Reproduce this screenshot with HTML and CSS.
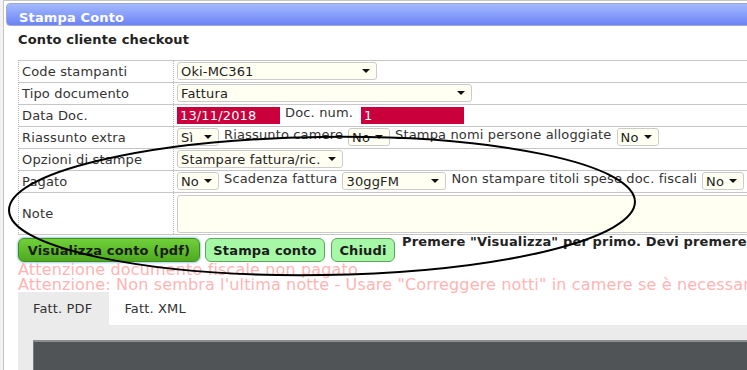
FILE: index.html
```html
<!DOCTYPE html>
<html lang="it">
<head>
  <meta charset="UTF-8">
  <meta name="viewport" content="width=device-width, initial-scale=1.0">
  <title>Stampa Conto</title>
  <link rel="stylesheet" href="styles.css">
</head>
<body>
  <div class="dialog">
    <div class="titlebar">Stampa Conto</div>
    <div class="content">
      <div class="heading">Conto cliente checkout</div>

      <div class="form">
        <div class="row">
          <div class="lbl">Code stampanti</div>
          <div class="val"><span class="sel w-printer">Oki-MC361</span></div>
        </div>
        <div class="row">
          <div class="lbl">Tipo documento</div>
          <div class="val"><span class="sel w-doctype">Fattura</span></div>
        </div>
        <div class="row">
          <div class="lbl">Data Doc.</div>
          <div class="val">
            <span class="red">13/11/2018</span>
            <span class="txt docnum">Doc. num.</span>
            <span class="red">1</span>
          </div>
        </div>
        <div class="row">
          <div class="lbl">Riassunto extra</div>
          <div class="val">
            <span class="sel w-small">Sì</span>
            <span class="txt">Riassunto camere</span>
            <span class="sel w-small">No</span>
            <span class="txt">Stampa nomi persone alloggiate</span>
            <span class="sel w-small">No</span>
          </div>
        </div>
        <div class="row">
          <div class="lbl">Opzioni di stampe</div>
          <div class="val"><span class="sel w-options">Stampare fattura/ric.</span></div>
        </div>
        <div class="row">
          <div class="lbl">Pagato</div>
          <div class="val">
            <span class="sel w-small">No</span>
            <span class="txt">Scadenza fattura</span>
            <span class="sel w-due">30ggFM</span>
            <span class="txt">Non stampare titoli spese doc. fiscali</span>
            <span class="sel w-small">No</span>
          </div>
        </div>
        <div class="row row-note">
          <div class="lbl">Note</div>
          <div class="val"><div class="note"></div></div>
        </div>
      </div>

      <div class="actions">
        <button class="btn btn-main">Visualizza conto (pdf)</button>
        <button class="btn btn-print">Stampa conto</button>
        <button class="btn btn-close">Chiudi</button>
        <span class="hint">Premere "Visualizza" per primo. Devi premere "Stampa conto" per registrare il documento</span>
      </div>

      <div class="warn">
        <div>Attenzione documento fiscale non pagato</div>
        <div>Attenzione: Non sembra l'ultima notte - Usare "Correggere notti" in camere se è necessario</div>
      </div>

      <div class="tabs">
        <div class="tab active">Fatt. PDF</div>
        <div class="tab">Fatt. XML</div>
      </div>
      <div class="panel">
        <div class="viewer"></div>
      </div>
    </div>
  </div>

  <!-- hand drawn mark over the form -->
  <svg class="mark" width="747" height="370" viewBox="0 0 747 370">
    <ellipse cx="322" cy="206" rx="313" ry="69" transform="rotate(-0.8 322 206)" fill="none" stroke="#000" stroke-width="2"/>
  </svg>
</body>
</html>
```

FILE: styles.css
```css
body {
  margin: 0;
  width: 747px;
  height: 370px;
  overflow: hidden;
  position: relative;
  font-family: "DejaVu Sans", Verdana, sans-serif;
  font-size: 13px;
  letter-spacing: 0.15px;
  color: #333;
  background-color: #f2f2f2;
}

.dialog {
  margin-left: 3px;
  width: 1000px;
  height: 420px;
  padding: 2px;
  border: 1px solid #c5c5c5;
  background-color: #fff;
}

.titlebar {
  height: 23px;
  box-sizing: border-box;
  padding: 6px 12px 0;
  line-height: 15px;
  border: 1px solid #9ea8d4;
  border-radius: 4px;
  background: linear-gradient(#a4baff, #6b83f6);
  color: #fff;
  font-weight: bold;
}

.content {
  padding: 0 12px;
}

.heading {
  margin-top: 6px;
  line-height: 16px;
  font-weight: bold;
  color: #222;
}

/* form table */
.form {
  margin-top: 12px;
  border-top: 1px solid #c6c6c6;
  border-left: 1px dotted #b5b5b5;
}

.row {
  display: grid;
  grid-template-columns: 155px 1fr;
  height: 22px;
  box-sizing: border-box;
  border-bottom: 1px solid #c6c6c6;
}

.row-note {
  height: 42px;
}

.lbl {
  padding-left: 3px;
  line-height: 21px;
  border-right: 1px dotted #b5b5b5;
}

.row-note .lbl {
  line-height: 41px;
}

.val {
  display: flex;
  align-items: flex-start;
  gap: 5px;
  padding-left: 3px;
}

.txt {
  line-height: 16px;
  white-space: nowrap;
}

.docnum {
  margin-right: 3px;
}

.sel {
  display: flex;
  height: 18px;
  box-sizing: border-box;
  margin-top: 1px;
  padding: 1px 0 0 3px;
  line-height: 16px;
  border: 1px solid #cbcbcb;
  border-radius: 3px;
  background-color: #fffff2;
  color: #222;
  white-space: nowrap;
  flex-shrink: 0;
}

.sel::after {
  content: "";
  align-self: center;
  margin: -1px 6px 0 auto;
  border-left: 4px solid transparent;
  border-right: 4px solid transparent;
  border-top: 4px solid #111;
}

.w-printer { width: 200px; }
.w-doctype { width: 295px; }
.w-small { width: 42px; }
.w-options { width: 166px; }
.w-due { width: 104px; }

.red {
  width: 103px;
  height: 17px;
  box-sizing: border-box;
  margin-top: 2px;
  padding: 1px 0 0 3px;
  line-height: 16px;
  background-color: #c9003b;
  color: #fff;
}

.note {
  width: 700px;
  height: 38px;
  box-sizing: border-box;
  margin-top: 2px;
  border: 1px solid #cbcbcb;
  border-radius: 3px;
  background-color: #fffff2;
}

/* buttons */
.actions {
  display: flex;
  align-items: flex-start;
  gap: 5px;
  white-space: nowrap;
}

.btn {
  flex-shrink: 0;
  height: 24px;
  margin-top: 3px;
  padding: 0;
  font-family: inherit;
  font-size: 13px;
  font-weight: bold;
  letter-spacing: 0.15px;
  color: #1c1c1c;
  border-radius: 6px;
  cursor: pointer;
}

.btn-main {
  width: 182px;
  border: 1px solid #3f8d1b;
  background: linear-gradient(#70d03a, #4fa920);
  box-shadow: 0 0 2px 1px #a6cfe9;
}

.btn-print {
  width: 120px;
  border: 1px solid #5ea55e;
  background-color: #a6f7a6;
}

.btn-close {
  width: 64px;
  margin-left: 1px;
  border: 1px solid #5ea55e;
  background-color: #a6f7a6;
}

.hint {
  margin-top: -1px;
  margin-left: 2px;
  line-height: 16px;
  font-weight: bold;
  color: #222;
}

.warn {
  font-size: 16px;
  line-height: 15px;
  color: #ffb4b4;
  white-space: nowrap;
}

/* tabs */
.tabs {
  display: flex;
  height: 33px;
}

.tab {
  padding: 0 17px 0 15px;
  line-height: 33px;
  color: #333;
}

.tab.active {
  background-color: #ebebeb;
}

.panel {
  padding: 15px;
  background-color: #ebebeb;
}

.viewer {
  height: 100px;
  border-top: 2px solid #8d8d8d;
  border-left: 1px solid #7a7a7a;
  background-color: #505457;
}

.mark {
  position: absolute;
  left: 0;
  top: 0;
  pointer-events: none;
}
```
